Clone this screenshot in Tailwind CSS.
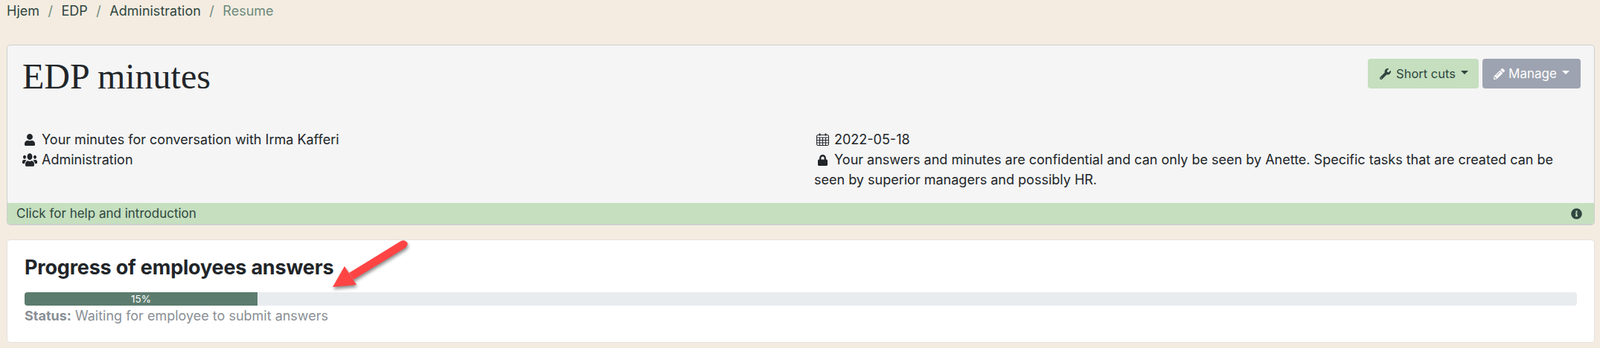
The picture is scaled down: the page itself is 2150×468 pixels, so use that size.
<!DOCTYPE html>
<html lang="en">
<head>
  <meta charset="UTF-8" />
  <title>EDP minutes</title>
  <script src="https://cdn.jsdelivr.net/npm/@tailwindcss/browser@4"></script>
</head>
<body class="bg-[#f4ece1] font-['Inter',sans-serif] text-[18px] leading-[27px] text-[#212529] overflow-hidden">
  <!-- breadcrumb -->
  <nav class="h-[60px] pl-[9px] pt-[1px] flex items-start text-[#2f4640]">
    <span>Hjem</span><span class="text-[#6d8b7d] px-[11.5px]">/</span>
    <span>EDP</span><span class="text-[#6d8b7d] px-[11.5px]">/</span>
    <span>Administration</span><span class="text-[#6d8b7d] px-[11.5px]">/</span>
    <span class="text-[#6d8b7d]">Resume</span>
  </nav>

  <!-- header card -->
  <div class="ml-[9px] w-[2134px] h-[243px] bg-[#f5f5f5] border border-[#cfcfcf] border-b-2 rounded-[5px] flex flex-col overflow-hidden">
    <div class="flex justify-between pl-[20px] pr-[18px] pt-[18px] h-[102px]">
      <h1 class="font-['Liberation_Serif',serif] text-[48px] leading-[58px] mt-[-5px]">EDP minutes</h1>
      <div class="flex gap-[5px]">
        <button class="h-[40px] w-[149px] pl-[2px] text-[16.5px] bg-[#c5dfbf] text-[#2f4640] rounded-[4px] flex items-center justify-center gap-[7px]">
          <svg class="w-[15px] h-[15px] fill-current" viewBox="0 0 512 512"><path d="M507.73 109.1c-2.24-9.03-13.54-12.09-20.12-5.51l-74.36 74.36-67.88-11.31-11.31-67.88 74.36-74.36c6.62-6.62 3.43-17.9-5.66-20.16-47.38-11.74-99.55.91-136.58 37.93-39.64 39.64-50.55 97.1-34.05 147.2L18.74 402.76c-24.99 24.99-24.99 65.51 0 90.5 24.99 24.99 65.51 24.99 90.5 0l213.21-213.21c50.12 16.71 107.47 5.68 147.37-34.22 37.07-37.07 49.7-89.32 37.91-136.73zM64 472c-13.25 0-24-10.75-24-24 0-13.26 10.75-24 24-24s24 10.74 24 24c0 13.25-10.75 24-24 24z"/></svg>
          <span>Short cuts</span>
          <span class="mt-[-4px] w-0 h-0 border-x-[5px] border-x-transparent border-t-[5px] border-t-current"></span>
        </button>
        <button class="h-[40px] w-[132px] text-[17px] bg-[#9da3b0] text-white rounded-[4px] flex items-center justify-center gap-[5px]">
          <svg class="w-[15px] h-[15px] fill-current" viewBox="0 0 512 512"><path d="M497.9 142.1l-46.1 46.1c-4.7 4.7-12.3 4.7-17 0l-111-111c-4.7-4.7-4.7-12.3 0-17l46.1-46.1c18.7-18.7 49.1-18.7 67.9 0l60.1 60.1c18.8 18.7 18.8 49.1 0 67.9zM284.2 99.8L21.6 362.4.4 483.9c-2.9 16.4 11.4 30.6 27.8 27.8l121.5-21.3 262.6-262.6c4.7-4.7 4.7-12.3 0-17l-111-111c-4.8-4.7-12.4-4.7-17.1 0zM124.1 339.9c-5.500-5.500-5.500-14.300 0-19.800l154-154c5.500-5.500 14.300-5.500 19.800 0s5.500 14.300 0 19.800l-154 154c-5.500 5.500-14.300 5.500-19.800 0zM88 424h48v36.300l-64.500 11.300-31.100-31.100L51.700 376H88v48z"/></svg>
          <span>Manage</span>
          <span class="ml-[2px] mt-[-4px] w-0 h-0 border-x-[5px] border-x-transparent border-t-[5px] border-t-current"></span>
        </button>
      </div>
    </div>

    <div class="flex-1 grid grid-cols-2 pl-[20px] pr-[28px] pt-[11px]">
      <div>
        <div class="flex items-center">
          <span class="w-[20px] flex justify-center mr-[6px]"><svg class="h-[16px] w-[14px] fill-current" viewBox="0 0 448 512"><path d="M224 256c70.700 0 128-57.300 128-128S294.700 0 224 0 96 57.300 96 128s57.300 128 128 128zm89.600 32h-16.700c-22.200 10.200-46.900 16-72.900 16s-50.600-5.800-72.900-16h-16.700C60.200 288 0 348.200 0 422.400V464c0 26.500 21.500 48 48 48h352c26.500 0 48-21.500 48-48v-41.600c0-74.200-60.200-134.400-134.400-134.400z"/></svg></span>
          <span>Your minutes for conversation with Irma Kafferi</span>
        </div>
        <div class="flex items-center">
          <span class="w-[20px] flex justify-center mr-[6px]"><svg class="h-[20px] w-[20px] fill-current" viewBox="0 0 640 512" preserveAspectRatio="none"><path d="M96 224c35.300 0 64-28.700 64-64s-28.700-64-64-64-64 28.700-64 64 28.700 64 64 64zm448 0c35.300 0 64-28.700 64-64s-28.700-64-64-64-64 28.700-64 64 28.700 64 64 64zm32 32h-64c-17.600 0-33.500 7.100-45.100 18.600 40.300 22.100 68.900 62 75.100 109.400h66c17.700 0 32-14.300 32-32v-32c0-35.300-28.700-64-64-64zm-256 0c61.900 0 112-50.100 112-112S381.900 32 320 32 208 82.100 208 144s50.100 112 112 112zm76.800 32h-8.300c-20.800 10-43.900 16-68.500 16s-47.600-6-68.500-16h-8.300C179.600 288 128 339.600 128 403.200V432c0 26.500 21.500 48 48 48h288c26.500 0 48-21.500 48-48v-28.800c0-63.600-51.600-115.200-115.200-115.200zm-223.700-13.400C161.500 263.100 145.600 256 128 256H64c-35.300 0-64 28.700-64 64v32c0 17.700 14.300 32 32 32h65.900c6.300-47.400 34.900-87.300 75.200-109.400z"/></svg></span>
          <span>Administration</span>
        </div>
      </div>
      <div class="pl-[22px]">
        <div>
          <span class="inline-flex w-[20px] justify-center mr-[6px] ml-[1px] align-[-2px]"><svg class="h-[17px] w-[17px]" viewBox="0 0 17 17" fill="none" stroke="currentColor"><rect x=".5" y="2.5" width="16" height="14" rx="1.5"/><path d="M.5 6h16M.5 9.500h16M.5 13h16M4.500 6v10.500M8.500 6v10.500M12.500 6v10.500"/><path d="M4.500 .5v3M12.500 .5v3" stroke-width="2"/></svg></span>2022-05-18
        </div>
        <div>
          <span class="inline-flex w-[20px] justify-center mr-[6px] ml-[1px] align-[-2px]"><svg class="h-[15px] w-[13px] fill-current" viewBox="0 0 448 512"><path d="M400 224h-24v-72C376 68.200 307.800 0 224 0S72 68.200 72 152v72H48c-26.500 0-48 21.500-48 48v192c0 26.500 21.500 48 48 48h352c26.500 0 48-21.500 48-48V272c0-26.500-21.500-48-48-48zm-104 0H152v-72c0-39.700 32.300-72 72-72s72 32.300 72 72v72z"/></svg></span>Your answers and minutes are confidential and can only be seen by Anette. Specific tasks that are created can be seen by superior managers and possibly HR.
        </div>
      </div>
    </div>

    <div class="h-[28px] bg-[#c5dfbf] text-[#2f4640] text-[17px] flex items-center justify-between pl-[12px] pr-[16px]">
      <span>Click for help and introduction</span>
      <svg class="w-[15px] h-[15px] fill-current" viewBox="0 0 512 512"><path d="M256 8C119.043 8 8 119.083 8 256c0 136.997 111.043 248 248 248s248-111.003 248-248C504 119.083 392.957 8 256 8zm0 110c23.196 0 42 18.804 42 42s-18.804 42-42 42-42-18.804-42-42 18.804-42 42-42zm56 254c0 6.627-5.373 12-12 12h-88c-6.627 0-12-5.373-12-12v-24c0-6.627 5.373-12 12-12h12v-64h-12c-6.627 0-12-5.373-12-12v-24c0-6.627 5.373-12 12-12h64c6.627 0 12 5.373 12 12v100h12c6.627 0 12 5.373 12 12v24z"/></svg>
    </div>
  </div>

  <!-- progress card -->
  <div class="relative ml-[9px] mt-[19px] w-[2134px] h-[139px] bg-white border border-[#e4e2df] rounded-[5px] pl-[23px] pr-[23px] pt-[21px]">
    <h2 class="text-[27px] leading-[32px] font-bold tracking-[-0.2px]">Progress of employees answers</h2>
    <div class="mt-[17px] h-[18px] bg-[#e9ecef] rounded-[4px] overflow-hidden">
      <div class="w-[15%] h-full bg-[#5c7c6f] text-white text-[13.5px] leading-[18px] text-center">15%</div>
    </div>
    <p class="text-[#8a8f96] leading-[24px] mt-[2px]"><b class="font-bold">Status:</b> Waiting for employee to submit answers</p>
    <svg class="absolute left-[430px] top-[0px] w-[130px] h-[70px] overflow-visible drop-shadow-[1px_3px_2px_rgba(0,0,0,0.45)]" viewBox="0 0 130 70">
      <path d="M99 1 L29 44 L35 53 L105 10 Q110 5 106 2 Q103 -1 99 1 Z" fill="#ff4444"/>
      <path d="M7 63 L23 35 L39 60 Z" fill="#ff4444"/>
    </svg>
  </div>
</body>
</html>
